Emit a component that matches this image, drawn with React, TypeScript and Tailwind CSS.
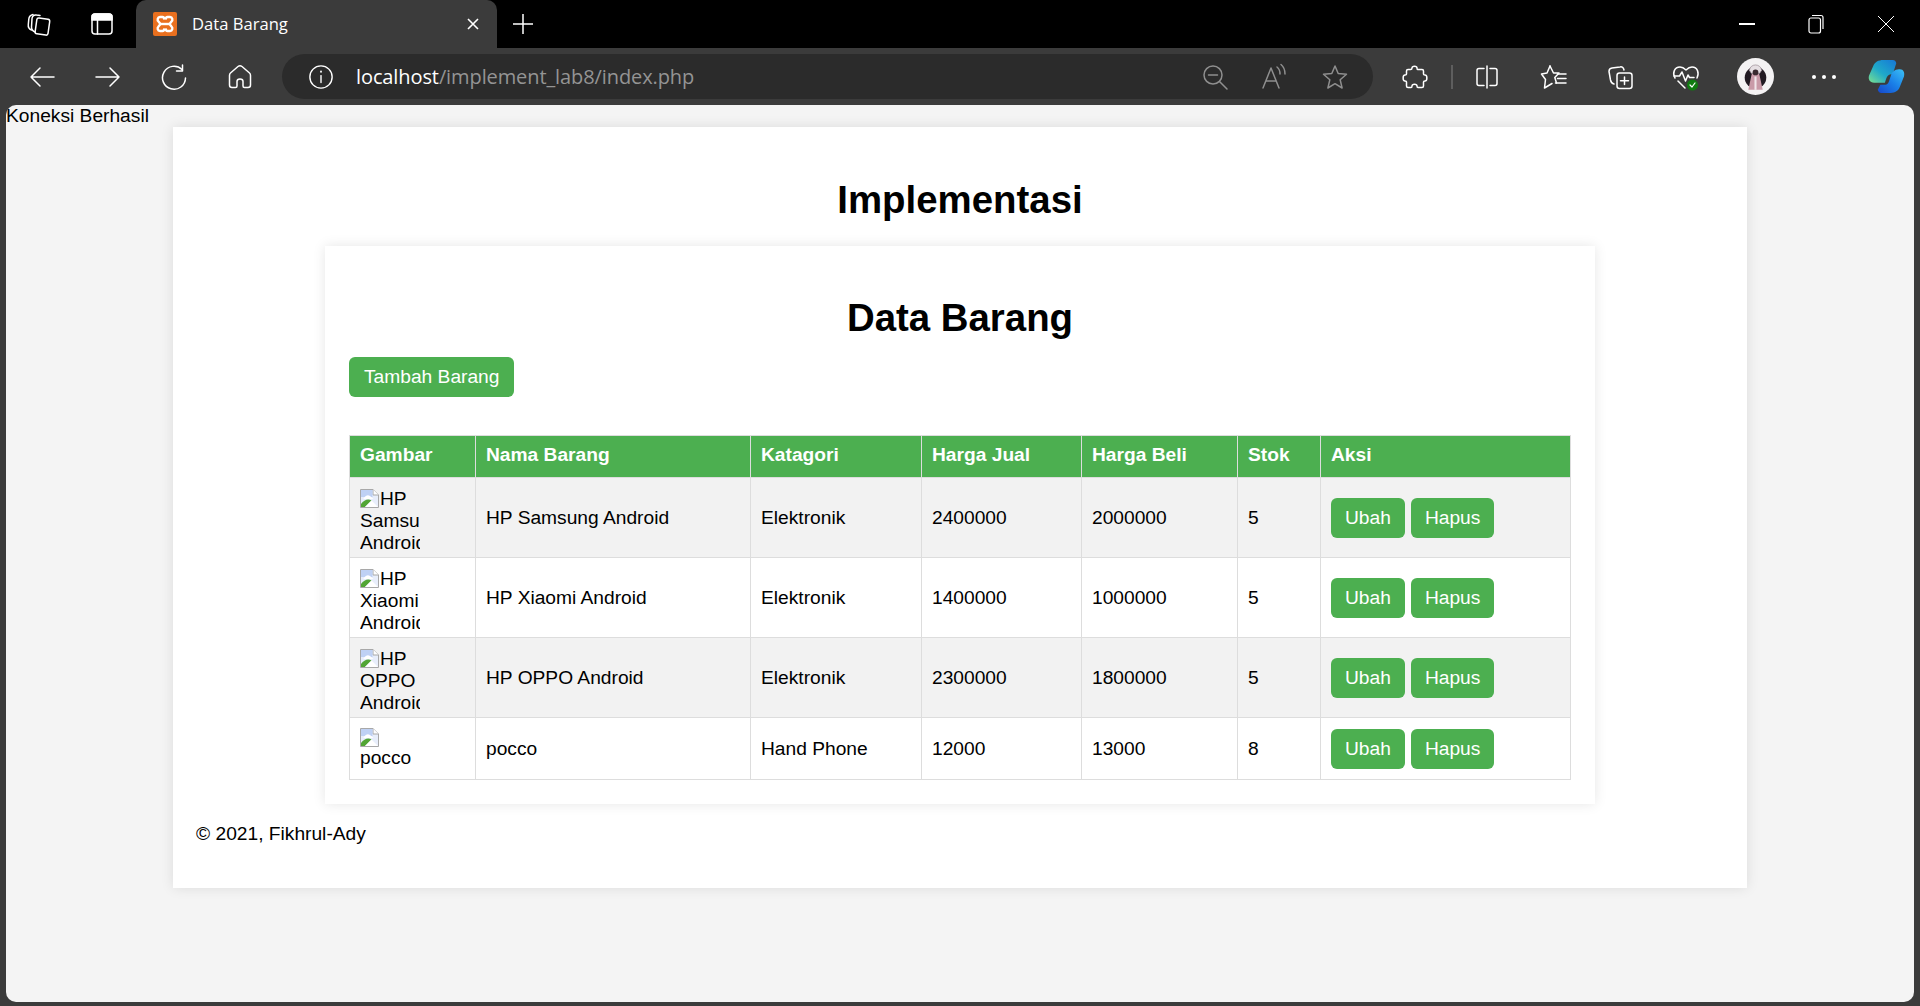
import type { ReactNode } from "react";

const rows = [
  { name: "HP Samsung Android", cat: "Elektronik", jual: "2400000", beli: "2000000", stok: "5" },
  { name: "HP Xiaomi Android", cat: "Elektronik", jual: "1400000", beli: "1000000", stok: "5" },
  { name: "HP OPPO Android", cat: "Elektronik", jual: "2300000", beli: "1800000", stok: "5" },
  { name: "pocco", cat: "Hand Phone", jual: "12000", beli: "13000", stok: "8" },
];

function Icon({ size = 28, dim, children }: { size?: number; dim?: boolean; children: ReactNode }) {
  return (
    <svg
      width={size}
      height={size}
      viewBox="0 0 28 28"
      fill="none"
      stroke={dim ? "#8f8f8f" : "#ffffff"}
      strokeWidth="1.5"
      strokeLinecap="round"
      strokeLinejoin="round"
    >
      {children}
    </svg>
  );
}

function ToolButton({ className = "", children }: { className?: string; children: ReactNode }) {
  return <div className={`flex h-[45px] w-[66px] shrink-0 items-center justify-center ${className}`}>{children}</div>;
}

function BrokenImage({ className }: { className: string }) {
  return (
    <svg width="19" height="19" viewBox="0 0 19 19" className={className}>
      <path d="M0.5 0.5H13L18.5 6V18.500H0.5Z" fill="#e8eefb" stroke="#a8a8a8" />
      <path d="M13 0.5V6H18.5" fill="#ffffff" stroke="#a8a8a8" />
      <path d="M1 8H12.500V1H1Z" fill="#bfd1f4" />
      <path d="M3.5 9.5C6 6 8 5.500 10 7L13.500 10H3.5Z" fill="#ffffff" />
      <path d="M1 18V15C4 11 8 9.5 11.5 11.5L5 18Z" fill="#52a535" />
      <path d="M11.5 11.5L18 18H5Z" fill="#ffffff" />
    </svg>
  );
}

function AltImage({ alt }: { alt: string }) {
  if (alt === "pocco") {
    return (
      <div className="h-[41px] w-[60px]">
        <BrokenImage className="block" />
        {alt}
      </div>
    );
  }
  return (
    <div className="mb-[-2px] h-[61px] w-[60px] overflow-hidden">
      <BrokenImage className="mr-[1px] inline-block align-[-3px]" />
      {alt}
    </div>
  );
}

function GreenButton({ small, children }: { small?: boolean; children: ReactNode }) {
  return (
    <button
      className={`h-[40px] rounded-[6px] bg-[#4caf50] text-[19.2px] text-white ${small ? "px-[14px]" : "px-[15px]"}`}
    >
      {children}
    </button>
  );
}

function BrowserChrome() {
  return (
    <div className="shrink-0 font-['Open_Sans',sans-serif]">
      <div className="flex h-[48px] items-stretch bg-black">
        <div className="flex w-[136px] shrink-0 items-center">
          <div className="flex w-[72px] justify-center pl-[6px]">
            <Icon>
              <rect x="11" y="8.5" width="13" height="16" rx="2" transform="rotate(8 17 16)" />
              <path d="M10 22C7.5 21 6.5 19.500 6.500 17L7 8.500C7.300 6 9 4.500 11.500 5L15 5.500" />
              <path d="M6.500 20C4 19 3 17 3.300 14.500L3.800 9C4.100 6.500 5.500 5 8 4.500" />
            </Icon>
          </div>
          <div className="flex w-[54px] justify-center pl-[6px]">
            <Icon>
              <path d="M4 10V7C4 5 5 4 7 4H21C23 4 24 5 24 7V10Z" fill="#ffffff" />
              <rect x="4" y="4" width="20" height="20" rx="3" />
              <path d="M9.500 10V24" />
            </Icon>
          </div>
        </div>
        <div className="flex w-[361px] shrink-0 items-center rounded-t-[10px] bg-[#3b3b3b] pl-[17px] pr-[17px]">
          <svg width="24" height="24" viewBox="0 0 24 24" className="shrink-0">
            <rect width="24" height="24" rx="2" fill="#e9701f" />
            <path
              d="M11 6.500C11 5.500 10.500 5 9.500 5H7C4.500 5 4 8 5.500 9.500L7.500 12L5.500 14.500C4 16 4.500 19 7 19H9.500C10.500 19 11 18.500 11 17.500M13 6.500C13 5.500 13.500 5 14.500 5H17C19.500 5 20 8 18.500 9.500L16.500 12L18.500 14.500C20 16 19.500 19 17 19H14.500C13.500 19 13 18.500 13 17.500"
              fill="none"
              stroke="#ffffff"
              strokeWidth="2.400"
              strokeLinecap="round"
            />
            <path d="M8 12H16" stroke="#ffffff" strokeWidth="2.400" />
          </svg>
          <span className="ml-[15px] flex-1 text-[16.6px] text-white">Data Barang</span>
          <svg width="14" height="14" viewBox="0 0 14 14" stroke="#ffffff" strokeWidth="1.600">
            <path d="M2 2L12 12M12 2L2 12" />
          </svg>
        </div>
        <div className="flex w-[52px] items-center justify-center">
          <svg width="22" height="22" viewBox="0 0 22 22" stroke="#ffffff" strokeWidth="1.500">
            <path d="M11 1V21M1 11H21" />
          </svg>
        </div>
        <div className="flex-1" />
        <div className="flex w-[68px] items-center justify-center">
          <div className="h-[1.500px] w-[16px] bg-white" />
        </div>
        <div className="flex w-[70px] items-center justify-center">
          <svg width="16" height="20" viewBox="0 0 16 20" fill="none" stroke="#ffffff" strokeWidth="1.200">
            <rect x="1" y="4" width="11.500" height="15" rx="2" />
            <path d="M4 1.500H13C14.500 1.500 15 2.500 15 3.500V15" />
          </svg>
        </div>
        <div className="flex w-[69px] items-center justify-center">
          <svg width="18" height="18" viewBox="0 0 18 18" stroke="#ffffff" strokeWidth="1">
            <path d="M1 1L17 17M17 1L1 17" />
          </svg>
        </div>
      </div>
      <div className="flex h-[57px] items-center overflow-hidden bg-[#3b3b3b] pl-[9px]">
        <div className="flex w-[264px] shrink-0">
          <div className="flex w-[66px] justify-center">
            <Icon>
              <path d="M26 14H3M12 5L3 14L12 23" />
            </Icon>
          </div>
          <div className="flex w-[66px] justify-center">
            <Icon>
              <path d="M2 14H25M16 5L25 14L16 23" />
            </Icon>
          </div>
          <div className="flex w-[66px] justify-center">
            <Icon>
              <path d="M22 6.500A11.500 11.500 0 1 0 25.500 15" />
              <path d="M22.500 2V8H16.500" />
            </Icon>
          </div>
          <div className="flex w-[66px] justify-center">
            <Icon>
              <path d="M12 3.500C13.200 2.500 14.800 2.500 16 3.500L23.500 10C24.300 10.700 24.500 11.500 24.500 12.500V22C24.500 23.500 23.500 24.500 22 24.500H18.500C17.500 24.500 17 24 17 23V18.500C17 17 16 16 14 16C12 16 11 17 11 18.500V23C11 24 10.500 24.500 9.500 24.500H6C4.500 24.500 3.500 23.500 3.500 22V12.500C3.500 11.500 3.700 10.700 4.500 10Z" />
            </Icon>
          </div>
        </div>
        <div className="ml-[9px] flex h-[45px] w-[1091px] shrink-0 items-center rounded-full bg-[#2b2b2b]">
          <div className="ml-[26px] flex h-[26px] w-[26px] items-center justify-center">
            <Icon size={26}>
              <circle cx="14" cy="14" r="12" />
              <path d="M14 12.500V20" />
              <path d="M14 8V8.300" strokeWidth="2" />
            </Icon>
          </div>
          <div className="ml-[22px] flex-1 whitespace-nowrap text-[20px] tracking-[-0.1px] text-white">
            localhost<span className="text-[#949494]">/implement_lab8/index.php</span>
          </div>
          <div className="flex items-center gap-[32px] pr-[24px]">
            <Icon dim>
              <circle cx="12" cy="12" r="9" />
              <path d="M7.500 12H16.500M18.500 18.500L26 26" />
            </Icon>
            <Icon dim>
              <path d="M2 25L10 5L18 25M5 18H15" />
              <path d="M16 4C18 5.500 19 8 19 11M20 1.500C23 4 24 7 24 11" />
            </Icon>
            <Icon dim>
              <path d="M14 3L17.200 10.500L25.500 11.300L19.200 16.800L21.100 25L14 20.700L6.900 25L8.800 16.800L2.500 11.300L10.800 10.500Z" />
            </Icon>
          </div>
        </div>
        <div className="flex w-[78px] shrink-0 justify-center pl-[5px]">
          <Icon>
            <path d="M11 5C11 2.500 16 2.500 16 5C16 6 16 6.500 16.500 6.500H21C22 6.500 22.500 7 22.500 8V11C22.500 12 23 12 24 12C26.500 12 26.500 18 24 18C23 18 22.500 18 22.500 19V23C22.500 24 22 24.500 21 24.500H17C16 24.500 16 24 16 23C16 20.500 11 20.500 11 23C11 24 11 24.500 10 24.500H7C6 24.500 5.500 24 5.500 23V19C5.500 18 5 18 4 18C1.500 18 1.500 12 4 12C5 12 5.500 12 5.500 11V8C5.500 7 6 6.500 7 6.500H9.500C10.500 6.500 11 6 11 5Z" />
          </Icon>
        </div>
        <div className="h-[24px] w-[2px] shrink-0 bg-[#5e5e5e]" />
        <ToolButton className="ml-[1px]">
          <Icon>
            <path d="M11 5.500H6C4.500 5.500 4 6.500 4 7.500V20.500C4 21.500 4.500 22.500 6 22.500H11" />
            <path d="M17 5.500H22C23.500 5.500 24 6.500 24 7.500V20.500C24 21.500 23.500 22.500 22 22.500H17" />
            <path d="M14 3V25" />
          </Icon>
        </ToolButton>
        <ToolButton className="ml-[1px]">
          <Icon>
            <path d="M10 3L13.500 10H19L14.800 14.500L16.500 20" />
            <path d="M10 3L7 10L1.500 11L5.500 16.500L4.500 25L12 20.500" />
            <path d="M18 11H26M17.500 15.500H26M15.500 20H26" />
          </Icon>
        </ToolButton>
        <ToolButton>
          <Icon>
            <rect x="11" y="10" width="15" height="15.500" rx="2.500" />
            <path d="M18.500 14V21.500M14.500 17.750H22.500" />
            <path d="M18 7C17.500 4.500 16 3.500 14 4L6 5C4 5.300 3 6.500 3 8.500L4.500 17C5 19.500 6 20.500 8 21" />
          </Icon>
        </ToolButton>
        <ToolButton>
          <svg width="30" height="30" viewBox="0 0 30 30" fill="none" stroke="#ffffff" strokeWidth="1.500" strokeLinecap="round" strokeLinejoin="round">
            <path d="M4 16C1 11 3.500 5 9 5C11.500 5 13.500 6.500 15 8C16.500 6.500 18.500 5 21 5C26.500 5 28.500 11 26 16" />
            <path d="M3 14H8.500L11 10L14.500 19L17 13L18.500 15.500H23" />
            <path d="M7 19L14 26" />
            <circle cx="21.500" cy="23" r="5.500" fill="#107c10" stroke="none" />
            <path d="M19 23L21 25L24 21" strokeWidth="1.200" />
          </svg>
        </ToolButton>
        <ToolButton className="ml-[3px]">
          <svg width="37" height="37" viewBox="0 0 36 36">
            <circle cx="18" cy="18" r="18" fill="#f4f2f3" />
            <circle cx="18" cy="19" r="10.500" fill="#221a22" />
            <path d="M11 31L14 17C14 13 22 13 22 17L25 31Z" fill="#c99aa8" />
            <path d="M12 12C13 5 23 5 24 12L22 15H14Z" fill="#e6dfe3" stroke="#8f7f88" strokeWidth="0.600" />
            <circle cx="18" cy="14" r="2.800" fill="#3a2a30" />
            <path d="M17 18H19V31H17Z" fill="#f1e6ea" />
          </svg>
        </ToolButton>
        <ToolButton className="ml-[3px]">
          <div className="flex gap-[6px]">
            <div className="h-[4px] w-[4px] rounded-full bg-white" />
            <div className="h-[4px] w-[4px] rounded-full bg-white" />
            <div className="h-[4px] w-[4px] rounded-full bg-white" />
          </div>
        </ToolButton>
        <ToolButton className="ml-[-4px]">
          <svg width="37" height="37" viewBox="0 0 36 34">
            <defs>
              <linearGradient id="cpA" x1="0" y1="1" x2="1" y2="0">
                <stop offset="0" stopColor="#7be08f" />
                <stop offset="0.45" stopColor="#1fa9c9" />
                <stop offset="1" stopColor="#1677d8" />
              </linearGradient>
              <linearGradient id="cpB" x1="0" y1="1" x2="1" y2="0">
                <stop offset="0" stopColor="#1747c9" />
                <stop offset="0.5" stopColor="#1a80e8" />
                <stop offset="1" stopColor="#3cc1f5" />
              </linearGradient>
            </defs>
            <path d="M15 1H24C26 1 27 2 27.500 4L24 15C19 14 18 18 16.500 23H6C1.500 23 0 19.500 1 16L5 7C6.500 3 10 1 15 1Z" fill="url(#cpA)" />
            <path d="M22 33H13C11 33 10 32 9.500 30L12 25H17C20 25 20.500 21 22 17C23 13 26 10 30 10H31C34.500 10 36 13.500 35 17L31 27C29.500 31 26.500 33 22 33Z" fill="url(#cpB)" />
          </svg>
        </ToolButton>
      </div>
    </div>
  );
}

export default function App() {
  return (
    <div className="flex h-[1006px] w-[1920px] flex-col overflow-hidden bg-[#3b3b3b] font-['Liberation_Sans',Arial,sans-serif] text-[19.2px] leading-[22px] text-black">
      <BrowserChrome />
      <main className="mx-[6px] mb-[4px] flex-1 overflow-hidden rounded-[10px] bg-[#f4f4f4]">
        <div className="h-[22px]">Koneksi Berhasil</div>
        <div className="mx-auto h-[761px] w-[1574px] bg-white shadow-[0_0_12px_rgba(0,0,0,0.1)]">
          <h1 className="pt-[50px] text-center text-[38.4px] font-bold leading-[46px]">Implementasi</h1>
          <div className="mx-auto mt-[23px] w-[1270px] bg-white px-[24px] pb-[24px] pt-[49px] shadow-[0_0_12px_rgba(0,0,0,0.1)]">
            <h2 className="text-center text-[38.4px] font-bold leading-[46px]">Data Barang</h2>
            <div className="mt-[16px]">
              <GreenButton>Tambah Barang</GreenButton>
            </div>
            <table className="mt-[38px] w-[1222px] table-fixed border-collapse">
              <thead>
                <tr className="bg-[#4caf50] text-left text-white">
                  <th className="w-[126px] border border-[#ddd] px-[10px] pb-[11px] pt-[8px]">Gambar</th>
                  <th className="w-[275px] border border-[#ddd] px-[10px] pb-[11px] pt-[8px]">Nama Barang</th>
                  <th className="w-[171px] border border-[#ddd] px-[10px] pb-[11px] pt-[8px]">Katagori</th>
                  <th className="w-[160px] border border-[#ddd] px-[10px] pb-[11px] pt-[8px]">Harga Jual</th>
                  <th className="w-[156px] border border-[#ddd] px-[10px] pb-[11px] pt-[8px]">Harga Beli</th>
                  <th className="w-[83px] border border-[#ddd] px-[10px] pb-[11px] pt-[8px]">Stok</th>
                  <th className="border border-[#ddd] px-[10px] pb-[11px] pt-[8px]">Aksi</th>
                </tr>
              </thead>
              <tbody>
                {rows.map((row, i) => (
                  <tr key={row.name} className={i % 2 === 0 ? "bg-[#f2f2f2]" : "bg-white"}>
                    <td className="border border-[#ddd] p-[10px]">
                      <AltImage alt={row.name} />
                    </td>
                    <td className="border border-[#ddd] p-[10px]">{row.name}</td>
                    <td className="border border-[#ddd] p-[10px]">{row.cat}</td>
                    <td className="border border-[#ddd] p-[10px]">{row.jual}</td>
                    <td className="border border-[#ddd] p-[10px]">{row.beli}</td>
                    <td className="border border-[#ddd] p-[10px]">{row.stok}</td>
                    <td className="border border-[#ddd] p-[10px]">
                      <div className="flex gap-[6px]">
                        <GreenButton small>Ubah</GreenButton>
                        <GreenButton small>Hapus</GreenButton>
                      </div>
                    </td>
                  </tr>
                ))}
              </tbody>
            </table>
          </div>
          <p className="ml-[23px] mt-[19px]">© 2021, Fikhrul-Ady</p>
        </div>
      </main>
    </div>
  );
}
